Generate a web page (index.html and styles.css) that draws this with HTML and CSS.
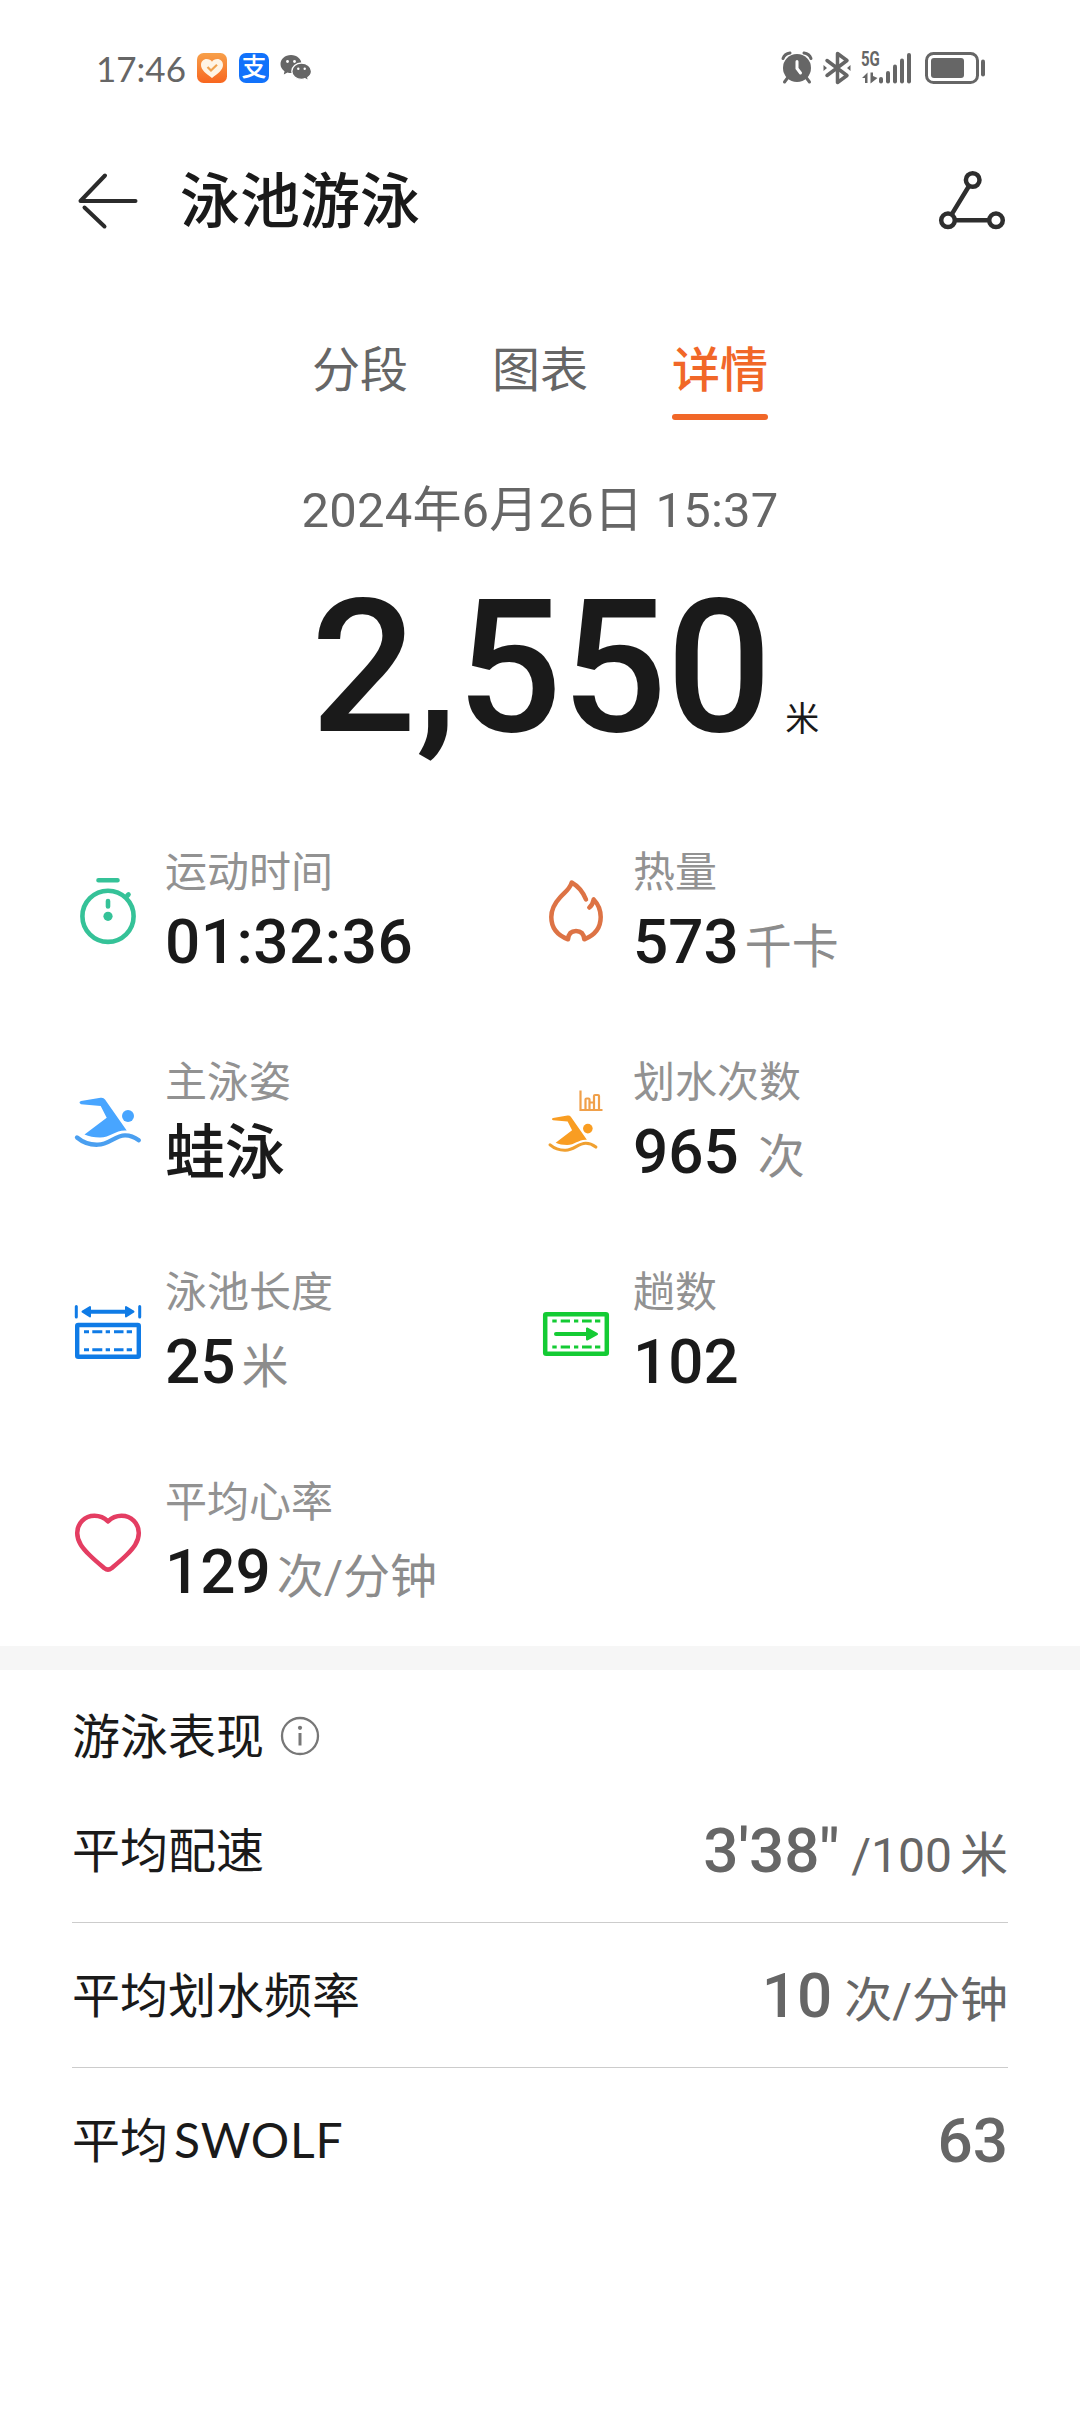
FILE: index.html
```html
<!DOCTYPE html>
<html lang="zh-CN">
<head>
  <meta charset="UTF-8">
  <meta name="viewport" content="width=device-width, initial-scale=1.0">
  <title>泳池游泳</title>
  <link rel="stylesheet" href="styles.css">
</head>
<body>

  <div class="status-bar">
    <div class="status-left">
      <span class="clock">17:46</span>
      <svg class="app-icon" width="30" height="30" viewBox="0 0 30 30">
        <defs><linearGradient id="health" x1="0" y1="0" x2="0" y2="1"><stop offset="0" stop-color="#f7a04a"/><stop offset="1" stop-color="#f8661f"/></linearGradient></defs>
        <rect width="30" height="30" rx="6.500" fill="url(#health)"/>
        <path d="M15 25C9 20.500 4 17 4 12C4 8.500 6.500 6 9.700 6C12 6 13.900 7 15 8.700C16.100 7 18 6 20.300 6C23.500 6 26 8.500 26 12C26 17 21 20.500 15 25Z" fill="#fff4e4"/>
        <path d="M10.500 14L14 17.500L20 11.800" fill="none" stroke="#f0a24e" stroke-width="2.200"/>
      </svg>
      <span class="alipay">支</span>
      <svg class="app-icon" width="32" height="28" viewBox="0 0 32 28" fill="#666">
        <path d="M11 1C4.900 1 0.500 5 0.500 10C0.500 13 2 15.500 4.500 17.200L3.800 20.500L7.500 18.500C8.600 18.900 9.800 19 11 19C17 19 21.500 15 21.500 10C21.500 5 17 1 11 1Z"/>
        <circle cx="7.500" cy="7.500" r="1.400" fill="#fff"/><circle cx="14.500" cy="7.500" r="1.400" fill="#fff"/>
        <path d="M21.500 9C16 9 11.800 12.700 11.800 17.200C11.800 21.800 16 25.300 21.500 25.300C22.700 25.300 23.900 25.100 25 24.700L28.500 26.800L27.800 23.500C30 22 31.500 19.800 31.500 17.200C31.500 12.700 27 9 21.500 9Z" stroke="#fff" stroke-width="1.300"/>
        <circle cx="18.300" cy="14.700" r="1.200" fill="#fff"/><circle cx="24.700" cy="14.700" r="1.200" fill="#fff"/>
      </svg>
    </div>
    <div class="status-right">
      <svg width="32" height="34" viewBox="0 0 32 34" fill="none" stroke="#666" stroke-linecap="round">
        <circle cx="16" cy="17" r="14" fill="#666" stroke="none"/>
        <path d="M2 7.500C3 4.500 5.500 2.500 9 2M30 7.500C29 4.500 26.500 2.500 23 2M6.500 27L3.500 31M25.500 27L28.500 31" stroke-width="3"/>
        <path d="M16 10.500V17.500L19.500 22" stroke="#fff" stroke-width="3"/>
      </svg>
      <svg width="28" height="34" viewBox="0 0 28 34" fill="none" stroke="#666" stroke-width="3.500" stroke-linejoin="round" stroke-linecap="round">
        <path d="M4 9.500L24 24.500L14.500 31.500V2.500L24 9.500L4 24.500"/>
        <path d="M0.500 14V20L4 17ZM27.500 14V20L24 17Z" fill="#666" stroke="none"/>
      </svg>
      <div class="signal">
        <span class="network">5G</span>
        <svg width="52" height="34" viewBox="0 0 52 34" fill="#666">
          <path d="M1 27L6.500 21.500V32H4V27ZM9.500 21.500H12V25L16.500 27L9.500 32.500Z"/>
          <rect x="18" y="26" width="4" height="6.500" rx="2"/>
          <rect x="25" y="20" width="4" height="12.500" rx="2"/>
          <rect x="32" y="13.500" width="4" height="19" rx="2"/>
          <rect x="39" y="7.500" width="4" height="25" rx="2"/>
          <rect x="46" y="2" width="4" height="30.500" rx="2"/>
        </svg>
      </div>
      <svg width="62" height="34" viewBox="0 0 62 34">
        <rect x="1.500" y="2.500" width="51" height="29" rx="7" fill="none" stroke="#666" stroke-width="3"/>
        <rect x="6" y="7" width="33" height="20" rx="3" fill="#666"/>
        <rect x="56" y="8.500" width="4" height="17" rx="2" fill="#666"/>
      </svg>
    </div>
  </div>

  <header class="header">
    <svg width="72" height="72" viewBox="0 0 72 72" fill="none" stroke="#2b2b2b" stroke-width="4" stroke-linecap="round" stroke-linejoin="round">
      <path d="M63.500 37H8.500L33 11.500M12.500 43.500L32.500 62.500"/>
    </svg>
    <h1 class="title">泳池游泳</h1>
    <svg class="share" width="72" height="72" viewBox="0 0 72 72" fill="none" stroke="#2e2e2e" stroke-width="4.500">
      <circle cx="36.700" cy="16" r="6.800"/><circle cx="12" cy="56.300" r="6.800"/><circle cx="60" cy="56.300" r="6.800"/>
      <path d="M33 22L15.700 50.300M19 56.300H53"/>
    </svg>
  </header>

  <nav class="tabs">
    <span class="tab">分段</span>
    <span class="tab">图表</span>
    <span class="tab active">详情</span>
  </nav>

  <div class="date">2024年6月26日 15:37</div>
  <div class="distance">2,550<span class="distance-unit">米</span></div>

  <section class="stats">
    <div class="stat">
      <svg width="72" height="72" viewBox="0 0 72 72" fill="none" stroke="#35c298" stroke-width="4.600" stroke-linecap="round">
        <circle cx="36" cy="42.300" r="25.600"/>
        <path d="M26.500 6.200H45.500M36 27V32.500M55 22L56.500 20.500"/>
        <circle cx="36" cy="42.300" r="4.600" fill="#35c298" stroke="none"/>
      </svg>
      <div class="stat-text">
        <div class="label">运动时间</div>
        <div class="value time">01:32:36</div>
      </div>
    </div>
    <div class="stat">
      <svg width="72" height="72" viewBox="0 0 72 72" fill="none" stroke="#dd7345" stroke-width="4.500" stroke-linecap="round" stroke-linejoin="round">
        <path d="M46 25.500C43 18 38 12 31.700 8.500C30 15 25 18 20 23.500C14 30 11.300 36 11.300 43C11.300 54 18 61.500 28 65.300C28.500 60 31 57 36 57C41 57 43.800 60 44.300 65.300C54 61.500 60.700 54 60.700 43C60.700 36 58 30 53.700 25.500C53 29 52 31.500 49.300 33.500"/>
      </svg>
      <div class="stat-text">
        <div class="label">热量</div>
        <div class="value">573<span class="unit">千卡</span></div>
      </div>
    </div>

    <div class="stat">
      <svg width="72" height="72" viewBox="0 0 72 72">
        <g fill="#48a5ff">
          <path d="M9 17L28.500 13.800Q31.500 13.300 33 15.500L54.700 46.500C44 45.500 38.500 53.500 28 53.500C22 53.500 17 52.500 12.500 50.500L34.700 33.700L28.700 22L9 20.300Q6 18.300 9 17Z"/>
          <circle cx="56" cy="32" r="6"/>
        </g>
        <path d="M5 53.500C11 58.500 19 61 26 60.700C37 60.500 43 51.500 53 51.300C58.500 51.200 63 53.500 66.800 56.300" fill="none" stroke="#4a9ff0" stroke-width="4.300" stroke-linecap="round"/>
      </svg>
      <div class="stat-text">
        <div class="label">主泳姿</div>
        <div class="value style-name">蛙泳</div>
      </div>
    </div>
    <div class="stat">
      <svg width="72" height="72" viewBox="0 0 72 72">
        <g transform="translate(6.400 21.300) scale(.74)">
          <path d="M9 17L28.500 13.800Q31.500 13.300 33 15.500L54.700 46.500C44 45.500 38.500 53.500 28 53.500C22 53.500 17 52.500 12.500 50.500L34.700 33.700L28.700 22L9 20.300Q6 18.300 9 17Z" fill="#f99d22"/>
          <circle cx="56" cy="31.500" r="6.500" fill="#f99d22"/>
          <path d="M5 53.500C11 58.500 19 61 26 60.700C37 60.500 43 51.500 53 51.300C58.500 51.200 63 53.500 66.800 56.300" fill="none" stroke="#f0a030" stroke-width="4.300" stroke-linecap="round"/>
        </g>
        <path d="M40.500 6.500V26H62.500M45.500 26V15.500Q45.500 14.500 46.500 14.500H48.500Q49.500 14.500 49.500 15.500V26M49.500 18.500H54M54 26V12Q54 11 55 11H58Q59 11 59 12V26" fill="none" stroke="#f0a04a" stroke-width="2.200"/>
      </svg>
      <div class="stat-text">
        <div class="label">划水次数</div>
        <div class="value">965<span class="unit spaced">次</span></div>
      </div>
    </div>

    <div class="stat">
      <svg width="72" height="72" viewBox="0 0 72 72" fill="none" stroke="#0f7be6">
        <rect x="5.200" y="31" width="61.600" height="31.800" rx="1" stroke-width="4.400"/>
        <path d="M12 37.700H17M20.300 37.700H30.300M33.700 37.700H38M42 37.700H51.500M54.700 37.700H60M12 55.700H17M20.300 55.700H30.300M33.700 55.700H38M42 55.700H51.500M54.700 55.700H60" stroke-width="3"/>
        <path d="M4.300 12.500V23M67.700 12.500V23" stroke-width="3" stroke-linecap="round"/>
        <path d="M16 17.700H56" stroke-width="4"/>
        <path d="M10.500 17.700L18 13V22.400ZM61.500 17.700L54 13V22.400Z" fill="#0f7be6" stroke-width="2" stroke-linejoin="round"/>
      </svg>
      <div class="stat-text">
        <div class="label">泳池长度</div>
        <div class="value">25<span class="unit">米</span></div>
      </div>
    </div>
    <div class="stat">
      <svg width="72" height="72" viewBox="0 0 72 72" fill="none" stroke="#14cb34">
        <rect x="5.200" y="20.200" width="61.600" height="39.500" rx="1" stroke-width="4.500"/>
        <path d="M12.300 27H16.700M20.700 27H30M34 27H38.300M42 27H51.700M55 27H60.300M12.300 53H16.700M20.700 53H30M34 53H38.300M42 53H51.700M55 53H60.300" stroke-width="3"/>
        <path d="M16 40H48" stroke-width="4" stroke-linecap="round"/>
        <path d="M57 40L47 34.500V45.500Z" fill="#14cb34" stroke-width="2" stroke-linejoin="round"/>
      </svg>
      <div class="stat-text">
        <div class="label">趟数</div>
        <div class="value">102</div>
      </div>
    </div>

    <div class="stat">
      <svg width="72" height="72" viewBox="0 0 72 72" fill="none" stroke="#e43d62" stroke-width="4.500" stroke-linejoin="round">
        <path d="M36 17.500C32 13.500 27.500 11.800 22.500 11.800C12.500 11.800 5.200 19.500 5.200 29C5.200 38 11 44.500 17.500 51C22.500 56 28 60.500 32.500 64.300Q36 67 39.500 64.300C44 60.500 49.500 56 54.500 51C61 44.500 66.800 38 66.800 29C66.800 19.500 59.500 11.800 49.500 11.800C44.500 11.800 40 13.500 36 17.500Z"/>
      </svg>
      <div class="stat-text">
        <div class="label">平均心率</div>
        <div class="value">129<span class="unit">次/分钟</span></div>
      </div>
    </div>
  </section>

  <div class="divider"></div>

  <section class="performance">
    <h2 class="section-title"><span>游泳表现</span>
      <svg width="40" height="40" viewBox="0 0 40 40" fill="none" stroke="#777" stroke-width="2.300">
        <circle cx="20" cy="20" r="18"/>
        <path d="M20 17V29.500" stroke-width="3"/>
        <circle cx="20" cy="11.800" r="2.100" fill="#777" stroke="none"/>
      </svg>
    </h2>
    <div class="row">
      <span class="row-name">平均配速</span>
      <span class="row-value">3'38"<span class="row-unit pace">/100<span class="meter">米</span></span></span>
    </div>
    <div class="row">
      <span class="row-name">平均划水频率</span>
      <span class="row-value">10<span class="row-unit">次/分钟</span></span>
    </div>
    <div class="row">
      <span class="row-name">平均<span class="latin">SWOLF</span></span>
      <span class="row-value">63</span>
    </div>
  </section>

</body>
</html>
```
FILE: styles.css
```css
* { box-sizing: border-box; }
body {
  margin: 0;
  background: #fff;
  color: #1a1a1a;
  font-family: Roboto, "Noto Sans CJK SC", sans-serif;
}
svg { display: block; flex: none; }
h1, h2 { margin: 0; }

/* Status bar */
.status-bar {
  display: flex;
  justify-content: space-between;
  align-items: center;
  height: 134px;
  padding: 1px 93px 0 96px;
  color: #666;
}
.status-left, .status-right {
  display: flex;
  align-items: center;
}
.clock {
  width: 101px;
  font-family: Lato, sans-serif;
  font-size: 35px;
  line-height: 40px;
}
.alipay {
  width: 30px;
  height: 30px;
  margin: 0 11px 0 12px;
  border-radius: 7px;
  background: #1272fb;
  color: #fff;
  font-size: 25px;
  font-weight: 500;
  line-height: 29px;
  text-align: center;
}
.status-right svg { margin-right: 10px; }
.status-right svg:last-child { margin-right: 0; }
.signal { display: grid; }
.signal > * { grid-area: 1 / 1; }
.status-right .signal svg { margin-right: 12px; }
.network {
  height: 16px;
  font-size: 20px;
  font-weight: 700;
  line-height: 17px;
  transform: scaleX(.75);
  transform-origin: left;
}

/* Header */
.header {
  display: flex;
  align-items: center;
  height: 132px;
  padding: 0 72px;
}
.title {
  flex: 1;
  margin-left: 36px;
  padding-top: 6px;
  font-size: 60px;
  font-weight: 500;
  line-height: 80px;
}

.tabs {
  display: flex;
  justify-content: center;
  gap: 84px;
  padding-top: 73px;
}
.tab {
  color: #666;
  font-size: 48px;
  line-height: 64px;
}
.tab.active {
  color: #f16728;
  font-weight: 500;
}
.tab.active::after {
  content: "";
  display: block;
  height: 6px;
  margin-top: 11px;
  border-radius: 3px;
  background: #f16728;
}

.date {
  margin-top: 59px;
  color: #666;
  font-size: 49px;
  line-height: 64px;
  letter-spacing: .2px;
  text-align: center;
}
.distance {
  height: 190px;
  margin-top: 29px;
  padding-left: 50px;
  font-size: 186px;
  font-weight: 500;
  line-height: 190px;
  letter-spacing: -.8px;
  text-align: center;
}
.distance-unit {
  margin-left: 14px;
  font-size: 34px;
  font-weight: 400;
  letter-spacing: 0;
}

/* Workout stats */
.stats {
  display: grid;
  grid-template-columns: 468px 468px;
  row-gap: 76px;
  padding: 81px 72px 39px;
}
.stat {
  display: flex;
  align-items: center;
  gap: 21px;
  height: 134px;
}
.label {
  padding-top: 2px;
  color: #929292;
  font-size: 42px;
  font-weight: 400;
  line-height: 56px;
}
.value {
  height: 72px;
  margin-top: 5px;
  font-size: 62px;
  font-weight: 500;
  line-height: 72px;
  white-space: nowrap;
}
.time { letter-spacing: .5px; }
.style-name {
  font-size: 60px;
  line-height: 75px;
}
.unit {
  margin-left: 6px;
  color: #8c8c8c;
  font-size: 47px;
  font-weight: 400;
}
.unit.spaced { margin-left: 19px; }

.divider {
  height: 24px;
  background: #f6f6f6;
}

/* Swim performance */
.performance { padding: 30px 72px 0; }
.section-title {
  display: flex;
  align-items: center;
  gap: 16px;
  height: 72px;
  font-size: 48px;
  font-weight: 400;
}
.section-title span { padding-bottom: 6px; }
.row {
  display: flex;
  justify-content: space-between;
  align-items: center;
  height: 145px;
  border-bottom: 1px solid #ccc;
}
.row:nth-of-type(1) { margin-top: 6px; }
.row:last-child { border-bottom: none; }
.row-name {
  padding-top: 3px;
  font-size: 48px;
  line-height: 72px;
}
.row:last-child .row-name { padding-top: 0; }
.row-value {
  height: 72px;
  color: #666;
  font-size: 62px;
  font-weight: 500;
  line-height: 74px;
}
.row:last-child .row-value { line-height: 72px; }
.row-unit {
  margin-left: 12px;
  font-size: 48px;
  font-weight: 400;
}
.meter { margin-left: 8px; }
.latin {
  margin-left: 6px;
  font-family: Lato, sans-serif;
  letter-spacing: .8px;
}
```
